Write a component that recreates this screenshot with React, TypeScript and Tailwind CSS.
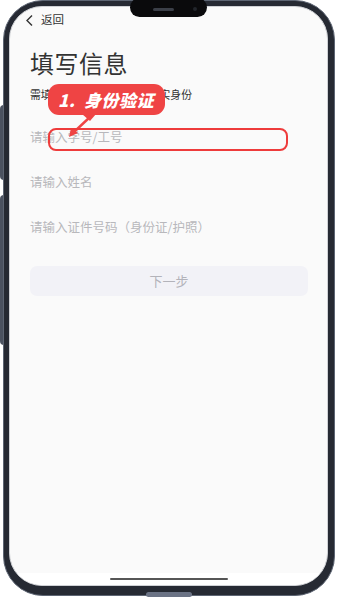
import React from "react";

const font = { fontFamily: '"Noto Sans CJK SC", "Noto Sans", sans-serif' };

function Notch() {
  return (
    <div className="absolute top-[-2px] left-[130px] w-[77px] h-[19px] rounded-full bg-[#0a0a0c] flex items-center">
      <div className="ml-[23px] mt-[3px] w-[21px] h-[3px] rounded-full bg-[#3b3f48]" />
      <div className="ml-[19px] mt-[2px] w-[4px] h-[4px] rounded-full bg-[#22252b]" />
    </div>
  );
}

function Callout() {
  return (
    <>
      <div className="absolute left-[48px] top-[84px] w-[117px] h-[31px] rounded-[11px] bg-[#ef4444] flex items-center pl-[10px]">
        <span className="text-white text-[17px] font-black italic tracking-[0.5px] leading-none">
          1.&nbsp;&nbsp;身份验证
        </span>
      </div>
      <svg
        className="absolute left-0 top-0"
        width="338"
        height="160"
        viewBox="0 0 338 160"
      >
        <polygon points="82,114 96,114 90,121" fill="#ef4444" />
        <line
          x1="90"
          y1="117"
          x2="74"
          y2="132"
          stroke="#ef4444"
          strokeWidth="2.4"
          strokeLinecap="round"
        />
        <polygon points="69,137 71,128 78,133" fill="#ef4444" />
      </svg>
      <div className="absolute left-[48px] top-[128px] w-[240px] h-[23px] rounded-[8px] border-2 border-[#ee3b3b]" />
    </>
  );
}

function Field({ text }: { text: string }) {
  return (
    <div className="h-[45px] flex items-center text-[12.5px] text-[#b8b8bc]">
      {text}
    </div>
  );
}

export default function App() {
  return (
    <div className="relative w-[338px] h-[600px] bg-white overflow-hidden" style={font}>
      {/* side buttons */}
      <div className="absolute left-0 top-[105px] w-[4px] h-[75px] rounded-l bg-[#4b5260]" />
      <div className="absolute left-0 top-[195px] w-[4px] h-[150px] rounded-l bg-[#4b5260]" />

      <div className="relative mx-[3px] h-[596px] rounded-[40px] bg-[#262a33] border border-[#5d6573] pt-[5px] pl-[5px] pr-[6px] pb-[9px]">
        <div className="h-full rounded-[33px] border border-[#cfd1d5] bg-[#fafafa] overflow-hidden flex flex-col">
          <div className="h-[26px] flex items-center pl-[15px] gap-[7px] text-[#333]">
            <svg width="9" height="13" viewBox="0 0 9 13">
              <path d="M7 1.5 L2 6.5 L7 11.5" fill="none" stroke="#333" strokeWidth="1.4" />
            </svg>
            <span className="text-[11.5px]">返回</span>
          </div>
          <div className="px-[20px]">
            <div className="mt-[14px] text-[24px] leading-[32px] text-[#333] tracking-[0.5px]">
              填写信息
            </div>
            <div className="mt-[7px] text-[10.8px] leading-[16px] text-[#333]">
              需填写以下信息验证您的真实身份
            </div>
            <div className="mt-[13px]">
              <Field text="请输入学号/工号" />
              <Field text="请输入姓名" />
              <Field text="请输入证件号码（身份证/护照）" />
            </div>
            <div className="mt-[16px] h-[30px] w-[278px] rounded-[7px] bg-[#f2f2f7] flex items-center justify-center text-[13px] text-[#b3b3ba]">
              下一步
            </div>
          </div>
          <div className="mt-auto h-[12px] bg-white flex justify-center pt-[5px]">
            <div className="w-[118px] h-[2px] rounded-full bg-[#555]" />
          </div>
        </div>
      </div>
      <div className="absolute left-[146px] top-[592px] w-[46px] h-[5px] rounded-full bg-[#6b7385]" />
      <Notch />
      <Callout />
    </div>
  );
}
